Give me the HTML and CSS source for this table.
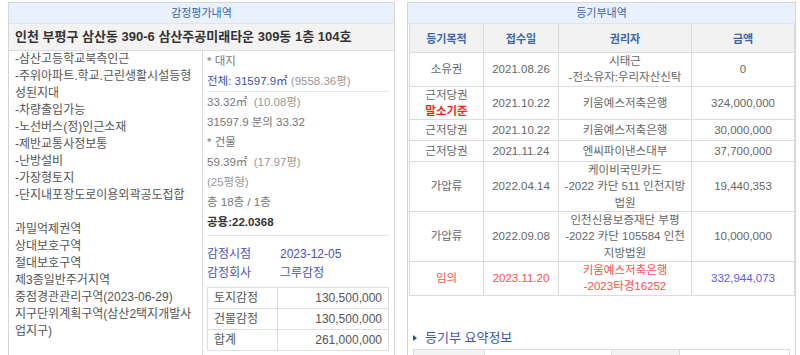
FILE: index.html
```html
<!DOCTYPE html>
<html lang="ko">
<head>
<meta charset="utf-8">
<title>감정평가내역 / 등기부내역</title>
<link rel="stylesheet" href="styles.css">
</head>
<body>
<div class="page">
  <section class="panel panel-left">
    <div class="ph">감정평가내역</div>
    <div class="addr">인천 부평구 삼산동 390-6 삼산주공미래타운 309동 1층 104호</div>
    <div class="pbody">
      <div class="desc">
        <div>-삼산고등학교북측인근</div>
        <div>-주위아파트.학교.근린생활시설등형</div>
        <div>성된지대</div>
        <div>-차량출입가능</div>
        <div>-노선버스(정)인근소재</div>
        <div>-제반교통사정보통</div>
        <div>-난방설비</div>
        <div>-가장형토지</div>
        <div>-단지내포장도로이용외곽공도접합</div>
        <div class="blank">&nbsp;</div>
        <div>과밀억제권역</div>
        <div>상대보호구역</div>
        <div>절대보호구역</div>
        <div>제3종일반주거지역</div>
        <div>중점경관관리구역(2023-06-29)</div>
        <div>지구단위계획구역(삼산2택지개발사</div>
        <div>업지구)</div>
      </div>
      <div class="info">
        <div class="it">* 대지</div>
        <div class="it sep"><span class="blue">전체: 31597.9㎡</span> <span class="light">(9558.36평)</span></div>
        <div class="it">33.32㎡ &nbsp;<span class="light">(10.08평)</span></div>
        <div class="it">31597.9 분의 33.32</div>
        <div class="it">* 건물</div>
        <div class="it">59.39㎡ &nbsp;<span class="light">(17.97평)</span></div>
        <div class="it light">(25평형)</div>
        <div class="it">층 18층 / 1층</div>
        <div class="it strong sep2">공용:22.0368</div>
        <div class="kv"><span class="k">감정시점</span><span>2023-12-05</span></div>
        <div class="kv"><span class="k">감정회사</span><span>그루감정</span></div>
        <table class="appr">
          <tr><td class="lbl">토지감정</td><td class="num">130,500,000</td></tr>
          <tr><td class="lbl">건물감정</td><td class="num">130,500,000</td></tr>
          <tr><td class="lbl">합계</td><td class="num">261,000,000</td></tr>
        </table>
      </div>
    </div>
  </section>

  <section class="panel panel-right">
    <div class="ph">등기부내역</div>
    <table class="reg">
      <colgroup><col class="c1"><col class="c2"><col class="c3"><col class="c4"></colgroup>
      <thead>
        <tr><th>등기목적</th><th>접수일</th><th>권리자</th><th>금액</th></tr>
      </thead>
      <tbody>
        <tr><td>소유권</td><td>2021.08.26</td><td>시태근<br>-전소유자:우리자산신탁</td><td>0</td></tr>
        <tr><td>근저당권<br><b class="red">말소기준</b></td><td>2021.10.22</td><td>키움예스저축은행</td><td>324,000,000</td></tr>
        <tr><td>근저당권</td><td>2021.10.22</td><td>키움예스저축은행</td><td>30,000,000</td></tr>
        <tr><td>근저당권</td><td>2021.11.24</td><td>엔씨파이낸스대부</td><td>37,700,000</td></tr>
        <tr><td>가압류</td><td>2022.04.14</td><td>케이비국민카드<br>-2022 카단 511 인천지방<br>법원</td><td>19,440,353</td></tr>
        <tr><td>가압류</td><td>2022.09.08</td><td>인천신용보증재단 부평<br>-2022 카단 105584 인천<br>지방법원</td><td>10,000,000</td></tr>
        <tr class="auction"><td>임의</td><td>2023.11.20</td><td>키움예스저축은행<br>-2023타경16252</td><td class="amt">332,944,073</td></tr>
      </tbody>
    </table>
    <h3 class="sum-title"><span class="tri"></span>등기부 요약정보</h3>
    <table class="sum">
      <tr><td class="lbl">가압류</td><td class="val">29,440,353 &nbsp;&nbsp;(2)</td><td class="lbl">근저당권</td><td class="val">391,700,000 &nbsp;&nbsp;(3)</td></tr>
    </table>
  </section>
</div>
</body>
</html>
```

FILE: styles.css
```css
html, body {
  margin: 0;
  padding: 0;
  overflow: hidden;
  background: #fff;
}

body {
  font-family: "Liberation Sans", "Noto Sans CJK KR", sans-serif;
  font-size: 11.5px;
  color: #666;
}

.page {
  display: flex;
  align-items: flex-start;
  gap: 12px;
  padding: 2px 0 0 8px;
}

.panel {
  box-sizing: border-box;
  border: 1px solid #d6d6d6;
  height: 420px;
  overflow: hidden;
}

.panel-left { width: 387px; }
.panel-right { width: 389px; }

.ph {
  height: 20px;
  line-height: 20px;
  background: #e9f2fc;
  border-bottom: 1px solid #dde5ef;
  text-align: center;
  color: #3b63a8;
  font-size: 11px;
}

.addr {
  height: 26px;
  line-height: 26px;
  background: #f3f3f3;
  border-bottom: 1px solid #dcdcdc;
  padding-left: 6px;
  font-size: 13px;
  font-weight: bold;
  color: #333;
  white-space: nowrap;
}

.pbody {
  display: grid;
  grid-template-columns: 193px 1fr;
  min-height: 380px;
}

.desc {
  padding: 0 0 0 6px;
  font-size: 12px;
  line-height: 17px;
  color: #555;
  white-space: nowrap;
}

.info {
  border-left: 1px solid #dcdcdc;
  padding: 0 5px 0 4px;
  color: #777;
}

.it {
  height: 20px;
  line-height: 20px;
  white-space: nowrap;
}

.sep {
  border-bottom: 1px solid #e6e6e6;
}

.sep2 {
  height: 23px;
  border-bottom: 1px solid #e3e3e3;
}

.blue { color: #3d4fb5; }
.light { color: #999; }
.strong { color: #333; font-weight: bold; }

.kv {
  display: flex;
  height: 19px;
  line-height: 19px;
  color: #4a55b8;
  font-size: 12px;
}
.kv .k { width: 73px; }

.info .sep2 + .kv { margin-top: 9px; }

.appr {
  margin-top: 4px;
  width: 182px;
  border-collapse: collapse;
  color: #555;
  font-size: 12px;
}
.appr td {
  border: 1px solid #dedede;
  height: 20px;
  padding: 0 6px;
  line-height: 20px;
}
.appr .lbl { width: 57px; }
.appr .num { text-align: right; }

.reg {
  margin: 0 1px;
  width: 385px;
  border-collapse: collapse;
  table-layout: fixed;
}
.reg .c1 { width: 74px; }
.reg .c2 { width: 75px; }
.reg .c3 { width: 133px; }
.reg .c4 { width: 103px; }

.reg th {
  height: 26px;
  background: #f2f2f2;
  border: 1px solid #dcdcdc;
  border-top: 0;
  color: #3a66b0;
  font-weight: bold;
  font-size: 11px;
}

.reg td {
  border: 1px solid #dcdcdc;
  height: 20px;
  padding: 0 1px;
  line-height: 16.3px;
  text-align: center;
  color: #666;
}

.reg td b.red {
  color: #ff1f1f;
}

.reg .auction td { color: #ff4d4d; }
.reg .auction td.amt { color: #5b5bf0; }

.sum-title {
  margin: 32px 0 1px 5px;
  height: 20px;
  line-height: 20px;
  font-size: 13px;
  font-weight: normal;
  color: #3a58a6;
  display: flex;
  align-items: center;
}

.tri {
  width: 0;
  height: 0;
  border-top: 3px solid transparent;
  border-bottom: 3px solid transparent;
  border-left: 4px solid #2c4f9a;
  margin-right: 8px;
}

.sum {
  margin-left: 5px;
  width: 377px;
  border-collapse: collapse;
  table-layout: fixed;
}
.sum td {
  border: 1px solid #dcdcdc;
  height: 20px;
  line-height: 20px;
  color: #666;
}
.sum td:nth-child(1) { width: 68px; }
.sum td:nth-child(2) { width: 119px; }
.sum td:nth-child(3) { width: 65px; }
.sum .lbl {
  background: #f3f3f3;
  text-align: center;
}
.sum .val {
  text-align: right;
  padding-right: 6px;
}
```
